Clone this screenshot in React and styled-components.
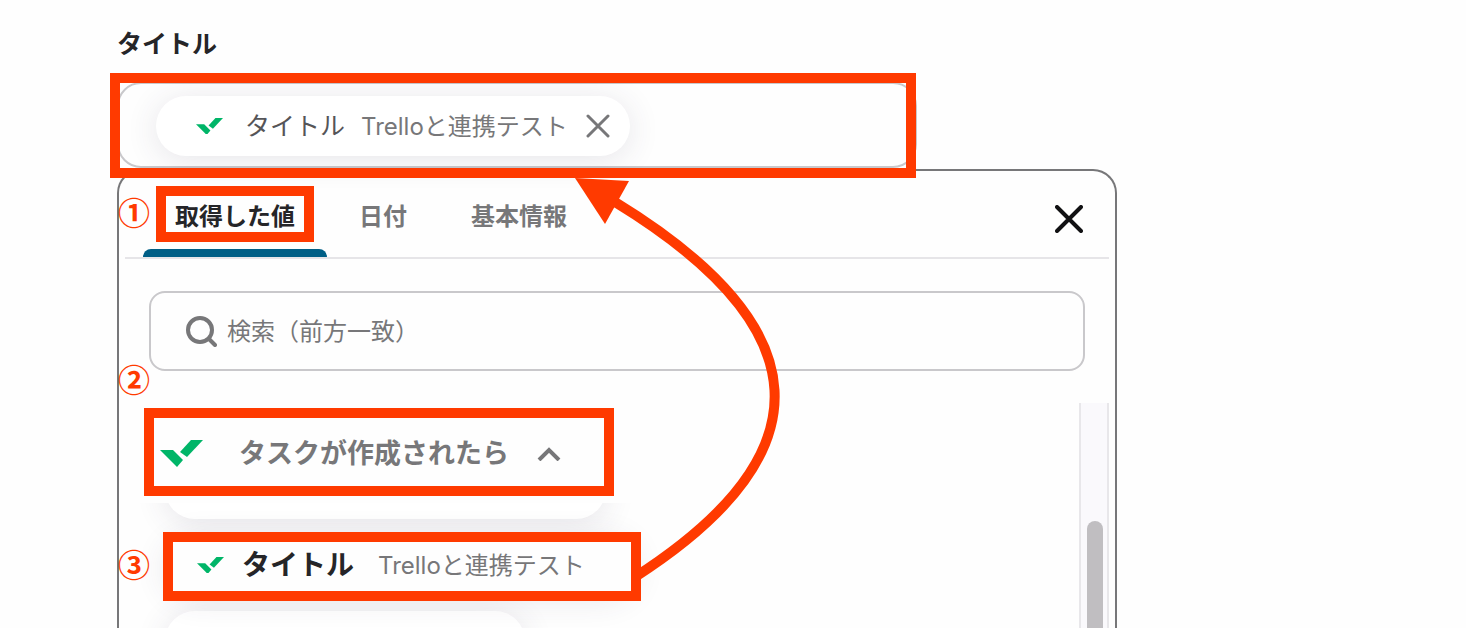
import React, {useState} from 'react'
import styled, {createGlobalStyle} from 'styled-components'

const accent = '#ff3a00';
const grey = '#777779';
const lineColor = '#c9c8cb';

const GlobalStyle = createGlobalStyle`
    * {
        box-sizing: border-box;
    }
    body {
        margin: 0;
        background: #fefefe;
        font-family: Inter, "Noto Sans CJK JP", sans-serif;
        color: #252528;
    }
    button, input {
        font-family: inherit;
        color: inherit;
        border: none;
        background: none;
        padding: 0;
        margin: 0;
    }
`

const Page = styled.main`
    height: 100vh;
    overflow: hidden;
    padding: 24px 24px 0 117px;
`

const Form = styled.div`
    position: relative;
    display: flex;
    flex-direction: column;
    max-width: 1000px;
    height: 100%;
`

const Label = styled.label`
    font-size: 25px;
    font-weight: 700;
    line-height: 40px;
    margin-bottom: 18px;
`

const Field = styled.div`
    position: relative;
    z-index: 1;
    width: 80%;
    height: 86px;
    flex-shrink: 0;
    padding: 12px 37px;
    border: 2px solid ${lineColor};
    border-radius: 24px;
`

// red frame drawn around the part being explained
const Highlight = styled.span`
    position: absolute;
    inset: ${props => props.$inset};
    border: 10px solid ${accent};
    pointer-events: none;
`

// same frame, but it hides the chip outline and sits under the chip text
const FilledHighlight = styled(Highlight)`
    z-index: -1;
    background: #fefefe;
`

const Step = styled.span`
    position: absolute;
    left: 1px;
    top: ${props => props.$top}px;
    font-family: "Noto Sans CJK JP", sans-serif;
    font-size: 32px;
    font-weight: 700;
    line-height: 32px;
    color: ${accent};
`

const Chip = styled.div`
    position: relative;
    z-index: ${props => props.$raised ? 1 : 0};
    display: inline-flex;
    align-items: center;
    height: 60px;
    min-width: ${props => props.$minWidth || 0}px;
    padding: 0 20px 0 ${props => props.$indent || 40}px;
    border-radius: 30px;
    background: #fff;
    box-shadow: 0 4px 32px rgba(60, 50, 80, 0.12);
    white-space: nowrap;
`

const ChipName = styled.span`
    font-size: ${props => props.$bold ? 28 : 25}px;
    font-weight: ${props => props.$bold ? 700 : 400};
    color: ${props => props.$bold ? '#252528' : '#555558'};
    margin: 0 ${props => props.$bold ? 24 : 16}px 0 ${props => props.$bold ? 18 : 22}px;
    padding-bottom: 4px;
`

const ChipSource = styled.span`
    font-size: 24px;
    color: ${grey};
    padding-bottom: 4px;
`

const IconButton = styled.button`
    display: flex;
    cursor: pointer;
    margin-left: ${props => props.$left || 0}px;
`

const Panel = styled.section`
    position: relative;
    flex: 1;
    display: flex;
    flex-direction: column;
    min-height: 0;
    margin-top: 1px;
    border: 2px solid ${grey};
    border-bottom: none;
    border-radius: 24px 24px 0 0;
`

const TabBar = styled.div`
    display: flex;
    align-items: stretch;
    height: 88px;
    flex-shrink: 0;
    margin: 0 6px;
    padding: 0 26px 0 18px;
    border-bottom: 2px solid #e6e5e8;
`

const Tab = styled.button`
    position: relative;
    padding: 14px 32px 0;
    font-size: 24px;
    font-weight: 700;
    line-height: 36px;
    color: ${props => props.$active ? '#252528' : grey};
    border-bottom: 8px solid transparent;
    cursor: pointer;
    &::after {
        content: '';
        position: absolute;
        left: 0;
        right: 0;
        bottom: -8px;
        height: 8px;
        border-radius: 8px 8px 0 0;
        background: ${props => props.$active ? '#005f86' : 'transparent'};
    }
`

const TabClose = styled(IconButton)`
    margin-left: auto;
    align-items: center;
    padding-top: 10px;
`

const SearchBox = styled.label`
    display: flex;
    align-items: center;
    gap: 10px;
    height: 80px;
    flex-shrink: 0;
    margin: 32px 30px;
    padding: 0 34px;
    border: 2px solid ${lineColor};
    border-radius: 16px;
`

const SearchInput = styled.input`
    flex: 1;
    font-size: 24px;
    outline: none;
    &::placeholder {
        color: ${grey};
        opacity: 1;
    }
`

const Results = styled.div`
    flex: 1;
    display: flex;
    justify-content: space-between;
    min-height: 0;
    padding-right: 6px;
`

const Groups = styled.div`
    flex: 1;
    display: flex;
    flex-direction: column;
    min-width: 0;
`

const GroupButton = styled.button`
    position: relative;
    display: flex;
    align-items: center;
    align-self: flex-start;
    height: 100px;
    flex-shrink: 0;
    padding: 0 53px 0 41px;
    cursor: pointer;
`

const GroupName = styled.span`
    font-size: 27px;
    font-weight: 700;
    color: ${grey};
    margin: 0 28px 0 36px;
    padding-bottom: 4px;
`

const ChipList = styled.div`
    flex: 1;
    min-height: 0;
    overflow: hidden;
    padding-left: 46px;
`

const ChipStack = styled.div`
    display: flex;
    flex-direction: column;
    align-items: flex-start;
    gap: 16px;
    margin-top: -44px;
`

const ScrollTrack = styled.div`
    width: 30px;
    padding: 118px 4px 0 6px;
    background: #faf9fc;
    border: solid #e8e7ea;
    border-width: 0 2px;
`

const ScrollThumb = styled.div`
    height: 100%;
    border-radius: 8px 8px 0 0;
    background: #c0bec1;
`

const Arrow = styled.svg`
    position: absolute;
    z-index: 2;
    left: 458px;
    top: 154px;
    pointer-events: none;
`

const Mark = ({size = 27}) => (
    <svg width={size} height={size * 27 / 43} viewBox="0 0 43 27">
        <path d="M0 10h13l10 10-6 7z" fill="#00b568"/>
        <path d="M20 12L31 0h12L27 17z" fill="#00b568"/>
    </svg>
)

const Cross = ({size, color, width}) => (
    <svg width={size} height={size} viewBox={`0 0 ${size} ${size}`} stroke={color} strokeWidth={width}
         strokeLinecap="round">
        <path d={`M2 2L${size - 2} ${size - 2}M${size - 2} 2L2 ${size - 2}`}/>
    </svg>
)

const tabs = ['取得した値', '日付', '基本情報'];

export default function App() {
    const [active, setActive] = useState(tabs[0]);
    const [picked, setPicked] = useState(true);

    return <Page>
        <GlobalStyle/>
        <Form>
            <Label id="title-label">タイトル</Label>
            <Field role="group" aria-labelledby="title-label">
                {picked && <Chip>
                    <Mark/>
                    <ChipName>タイトル</ChipName>
                    <ChipSource>Trelloと連携テスト</ChipSource>
                    <IconButton $left={18} aria-label="削除" onClick={() => setPicked(false)}>
                        <Cross size={24} color={grey} width={3}/>
                    </IconButton>
                </Chip>}
                <Highlight $inset="-11px -1px -12px -9px"/>
            </Field>

            <Panel>
                <TabBar role="tablist">
                    {tabs.map(name => (
                        <Tab key={name} role="tab" aria-selected={name === active} $active={name === active}
                             onClick={() => setActive(name)}>
                            {name}
                            {name === tabs[0] && <Highlight $inset="15px 13px 7px 13px"/>}
                        </Tab>
                    ))}
                    <TabClose aria-label="閉じる">
                        <Cross size={28} color="#111113" width={4}/>
                    </TabClose>
                </TabBar>

                <SearchBox>
                    <svg width="32" height="32" viewBox="0 0 32 32" fill="none" stroke={grey} strokeWidth="4"
                         strokeLinecap="round">
                        <circle cx="15" cy="15" r="12"/>
                        <path d="M24 24l6 6"/>
                    </svg>
                    <SearchInput type="text" aria-label="検索" placeholder="検索（前方一致）"/>
                </SearchBox>

                <Results>
                    <Groups>
                        <GroupButton aria-expanded="true">
                            <Mark size={43}/>
                            <GroupName>タスクが作成されたら</GroupName>
                            <svg width="24" height="16" viewBox="0 0 24 16" fill="none" stroke={grey}
                                 strokeWidth="4">
                                <path d="M2 15L12 5l10 10"/>
                            </svg>
                            <Highlight $inset="5px 0 7px 25px"/>
                        </GroupButton>
                        <ChipList>
                            <ChipStack>
                                <Chip $minWidth={441}/>
                                <Chip $raised $indent={32} $minWidth={470}>
                                    <FilledHighlight $inset="-3px -6px -6px -2px"/>
                                    <Mark/>
                                    <ChipName $bold>タイトル</ChipName>
                                    <ChipSource>Trelloと連携テスト</ChipSource>
                                </Chip>
                                <Chip $minWidth={360}/>
                            </ChipStack>
                        </ChipList>
                    </Groups>
                    <ScrollTrack>
                        <ScrollThumb/>
                    </ScrollTrack>
                </Results>
            </Panel>

            <Step $top={171}>①</Step>
            <Step $top={338}>②</Step>
            <Step $top={523}>③</Step>
            <Arrow width="210" height="404" viewBox="0 0 210 404">
                <path d="M40 24Q349 213 60 399" fill="none" stroke={accent} strokeWidth="10"/>
                <path d="M0 0l54 3-24 43z" fill={accent}/>
            </Arrow>
        </Form>
    </Page>
}
